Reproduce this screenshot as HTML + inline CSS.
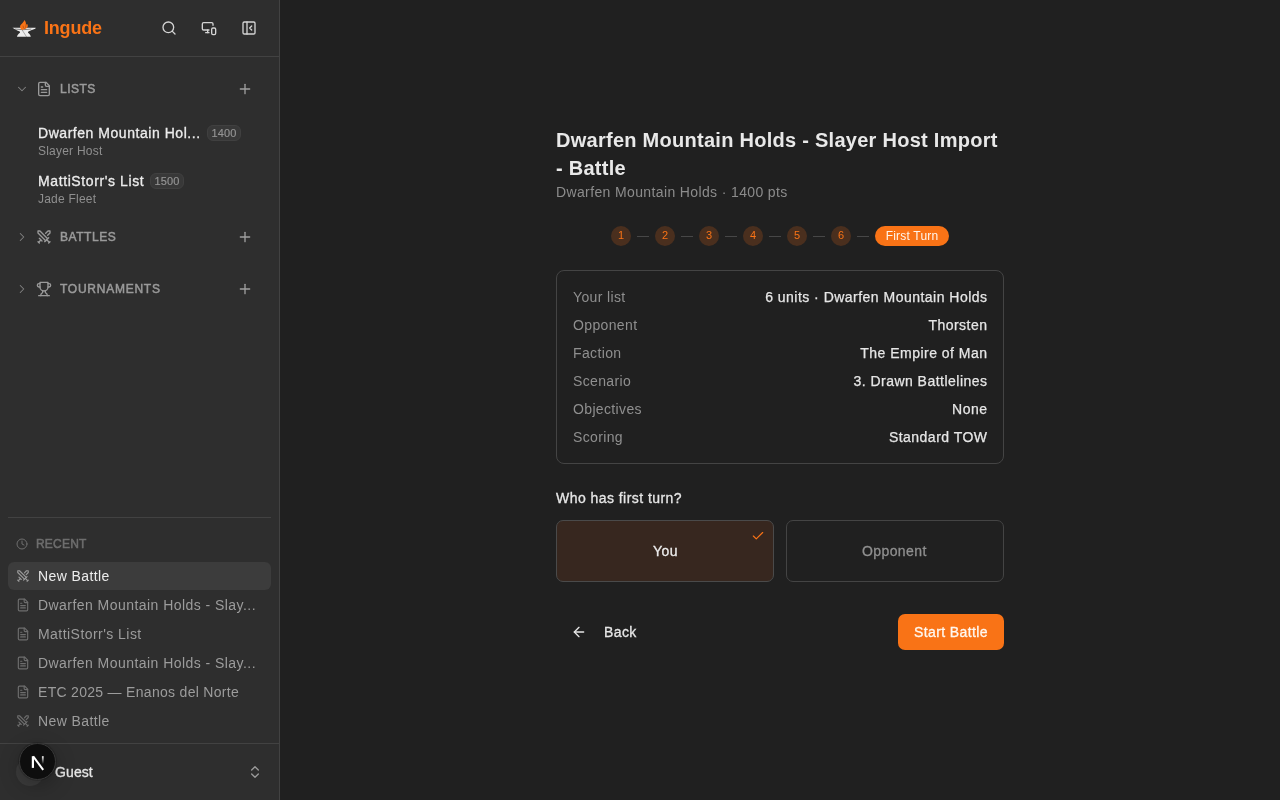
<!DOCTYPE html>
<html><head><meta charset="utf-8">
<style>
*{box-sizing:border-box;margin:0;padding:0}
html,body{width:1280px;height:800px;overflow:hidden;background:#202020;font-family:"Liberation Sans",sans-serif;}
#root{position:absolute;left:0;top:0;width:1280px;height:800px;overflow:hidden;will-change:transform;background:#202020}
.a{position:absolute;white-space:nowrap;line-height:1}
svg{position:absolute;fill:none;stroke-linecap:round;stroke-linejoin:round}
#side{position:absolute;left:0;top:0;width:280px;height:800px;background:#2e2e2e;border-right:1px solid #424242}
.hdr{font-size:12px;font-weight:400;color:#9a9a9a;letter-spacing:0.5px;-webkit-text-stroke:0.5px currentColor}
.t14{font-size:14px;letter-spacing:0.4px}
.t12{font-size:12px;letter-spacing:0.22px}
.med{-webkit-text-stroke:0.3px currentColor}
.badge{position:absolute;height:16px;width:34px;border-radius:6px;background:#383838;border:1px solid #404040;color:#959595;font-size:11px;line-height:14px;text-align:center;letter-spacing:0.1px;-webkit-text-stroke:0.15px currentColor}
.ri{color:#9c9c9c}
.row{position:absolute;left:573px;width:414px;height:20px;font-size:14px;line-height:20px}
.row .l{position:absolute;left:0;top:0;color:#8f8f8f;letter-spacing:0.36px}
.row .v{position:absolute;right:-0.5px;top:0;color:#e6e6e6;letter-spacing:0.48px;-webkit-text-stroke:0.25px currentColor}
.step{position:absolute;top:226px;width:20px;height:20px;border-radius:10px;background:#4a2f1e;color:#f97316;font-size:11px;line-height:19px;text-align:center}
.dash{position:absolute;top:236px;width:12px;height:1px;background:#474747}
</style></head><body><div id="root">
<div id="side">
  <!-- header -->
  <svg style="left:10px;top:16px" width="30" height="24" viewBox="0 0 30 24">
    <path d="M2.5 11.8 L25.7 11.8 L25.3 12.8 C23 13.6 20.5 14.3 18.4 15.4 L17.9 16.8 C19.5 17.8 20.5 19 20.8 20.7 L7 20.7 C7.3 19 8.5 17.8 10 16.8 L9.8 15.5 C7 14.5 4.5 13.3 2.5 11.8 Z" fill="#ececec" stroke="none"/>
    <path d="M5.5 13.1 Q13 14.4 21 13.1" stroke="#2e2e2e" stroke-width="0.7" stroke-opacity="0.8"/>
    <path d="M12.3 14.2 L16.4 20.6" stroke="#2e2e2e" stroke-width="0.5" stroke-opacity="0.7"/>
    <path d="M14.5 3.9 C15.8 5.5 16.2 7 15.8 8.8 L17.2 8 C18.3 9.5 18 11.5 15.8 12.8 L12 14 C10.3 13 9.7 11 10.3 9.5 C11 8 13.5 6.5 14.5 3.9 Z" fill="#f97316" stroke="none"/>
    <path d="M13 10 Q13.2 11.8 14.2 12.6 M16 9.2 Q15.4 10.6 15.7 12" stroke="#5a2a10" stroke-width="0.5" stroke-opacity="0.7"/>
  </svg>
  <div class="a" style="left:44px;top:18.5px;font-size:18px;font-weight:700;color:#f97316;letter-spacing:-0.2px">Ingude</div>
  <svg style="left:161px;top:20px" width="16" height="16" viewBox="0 0 24 24" stroke="#d4d4d4" stroke-width="2"><circle cx="11" cy="11" r="8"/><path d="m21 21-4.3-4.3"/></svg>
  <svg style="left:201px;top:20px" width="16" height="16" viewBox="0 0 24 24" stroke="#d4d4d4" stroke-width="2"><path d="M18 8V6a2 2 0 0 0-2-2H4a2 2 0 0 0-2 2v7a2 2 0 0 0 2 2h8"/><path d="M10 19v-3.96 3.15"/><path d="M7 19h5"/><rect width="6" height="10" x="16" y="12" rx="2"/></svg>
  <svg style="left:241px;top:20px" width="16" height="16" viewBox="0 0 24 24" stroke="#d4d4d4" stroke-width="2"><rect width="18" height="18" x="3" y="3" rx="2"/><path d="M9 3v18"/><path d="m16 15-3-3 3-3"/></svg>
  <div style="position:absolute;left:0;top:56px;width:279px;height:1px;background:#424242"></div>

  <!-- LISTS -->
  <svg style="left:15px;top:82px" width="14" height="14" viewBox="0 0 24 24" stroke="#828282" stroke-width="1.8"><path d="m6 9 6 6 6-6"/></svg>
  <svg style="left:36px;top:81px" width="16" height="16" viewBox="0 0 24 24" stroke="#9a9a9a" stroke-width="2"><path d="M15 2H6a2 2 0 0 0-2 2v16a2 2 0 0 0 2 2h12a2 2 0 0 0 2-2V7Z"/><path d="M14 2v4a2 2 0 0 0 2 2h4"/><path d="M10 9H8"/><path d="M16 13H8"/><path d="M16 17H8"/></svg>
  <div class="a hdr" style="left:60px;top:82.5px;letter-spacing:0.5px">LISTS</div>
  <svg style="left:237px;top:81px" width="16" height="16" viewBox="0 0 24 24" stroke="#a0a0a0" stroke-width="2"><path d="M5 12h14"/><path d="M12 5v14"/></svg>

  <div class="a t14 med" style="left:38px;top:126px;color:#ececec;letter-spacing:0.54px">Dwarfen Mountain Hol...</div>
  <div class="badge" style="left:207px;top:125px">1400</div>
  <div class="a t12" style="left:38px;top:144.8px;color:#8f8f8f">Slayer Host</div>

  <div class="a t14 med" style="left:38px;top:174.2px;color:#ececec;letter-spacing:0.6px">MattiStorr's List</div>
  <div class="badge" style="left:150px;top:173px">1500</div>
  <div class="a t12" style="left:38px;top:193px;color:#8f8f8f">Jade Fleet</div>

  <!-- BATTLES -->
  <svg style="left:15px;top:230px" width="14" height="14" viewBox="0 0 24 24" stroke="#828282" stroke-width="1.8"><path d="m9 18 6-6-6-6"/></svg>
  <svg style="left:36px;top:229px" width="16" height="16" viewBox="0 0 24 24" stroke="#9a9a9a" stroke-width="2"><polyline points="14.5 17.5 3 6 3 3 6 3 17.5 14.5"/><line x1="13" x2="19" y1="19" y2="13"/><line x1="16" x2="20" y1="16" y2="20"/><line x1="19" x2="21" y1="21" y2="19"/><polyline points="14.5 6.5 18 3 21 3 21 6 17.5 9.5"/><line x1="5" x2="9" y1="14" y2="18"/><line x1="7" x2="4" y1="17" y2="20"/><line x1="3" x2="5" y1="19" y2="21"/></svg>
  <div class="a hdr" style="left:60px;top:230.6px;letter-spacing:0.55px">BATTLES</div>
  <svg style="left:237px;top:229px" width="16" height="16" viewBox="0 0 24 24" stroke="#a0a0a0" stroke-width="2"><path d="M5 12h14"/><path d="M12 5v14"/></svg>

  <!-- TOURNAMENTS -->
  <svg style="left:15px;top:282px" width="14" height="14" viewBox="0 0 24 24" stroke="#828282" stroke-width="1.8"><path d="m9 18 6-6-6-6"/></svg>
  <svg style="left:36px;top:281px" width="16" height="16" viewBox="0 0 24 24" stroke="#9a9a9a" stroke-width="2"><path d="M6 9H4.5a2.5 2.5 0 0 1 0-5H6"/><path d="M18 9h1.5a2.5 2.5 0 0 0 0-5H18"/><path d="M4 22h16"/><path d="M10 14.66V17c0 .55-.47.98-.97 1.21C7.85 18.75 7 20.24 7 22"/><path d="M14 14.66V17c0 .55.47.98.97 1.21C16.150 18.75 17 20.24 17 22"/><path d="M18 2H6v7a6 6 0 0 0 12 0V2Z"/></svg>
  <div class="a hdr" style="left:60px;top:282.5px;letter-spacing:0.75px">TOURNAMENTS</div>
  <svg style="left:237px;top:281px" width="16" height="16" viewBox="0 0 24 24" stroke="#a0a0a0" stroke-width="2"><path d="M5 12h14"/><path d="M12 5v14"/></svg>

  <!-- RECENT -->
  <div style="position:absolute;left:8px;top:517px;width:263px;height:1px;background:#424242"></div>
  <svg style="left:16px;top:538px" width="12" height="12" viewBox="0 0 24 24" stroke="#6e6e6e" stroke-width="2"><circle cx="12" cy="12" r="10"/><polyline points="12 6 12 12 16 14"/></svg>
  <div class="a hdr" style="left:36px;top:537.7px;color:#6e6e6e;letter-spacing:0.2px">RECENT</div>

  <div style="position:absolute;left:8px;top:562px;width:263px;height:28px;border-radius:6px;background:#3c3c3c"></div>
  <svg style="left:16px;top:569px" width="14" height="14" viewBox="0 0 24 24" stroke="#9a9a9a" stroke-width="2"><polyline points="14.5 17.5 3 6 3 3 6 3 17.5 14.5"/><line x1="13" x2="19" y1="19" y2="13"/><line x1="16" x2="20" y1="16" y2="20"/><line x1="19" x2="21" y1="21" y2="19"/><polyline points="14.5 6.5 18 3 21 3 21 6 17.5 9.5"/><line x1="5" x2="9" y1="14" y2="18"/><line x1="7" x2="4" y1="17" y2="20"/><line x1="3" x2="5" y1="19" y2="21"/></svg>
  <div class="a t14" style="left:38px;top:569px;color:#ececec">New Battle</div>

  <svg style="left:16px;top:598px" width="14" height="14" viewBox="0 0 24 24" stroke="#6e6e6e" stroke-width="2"><path d="M15 2H6a2 2 0 0 0-2 2v16a2 2 0 0 0 2 2h12a2 2 0 0 0 2-2V7Z"/><path d="M14 2v4a2 2 0 0 0 2 2h4"/><path d="M10 9H8"/><path d="M16 13H8"/><path d="M16 17H8"/></svg>
  <div class="a t14 ri" style="left:38px;top:598px;letter-spacing:0.45px">Dwarfen Mountain Holds - Slay...</div>
  <svg style="left:16px;top:627px" width="14" height="14" viewBox="0 0 24 24" stroke="#6e6e6e" stroke-width="2"><path d="M15 2H6a2 2 0 0 0-2 2v16a2 2 0 0 0 2 2h12a2 2 0 0 0 2-2V7Z"/><path d="M14 2v4a2 2 0 0 0 2 2h4"/><path d="M10 9H8"/><path d="M16 13H8"/><path d="M16 17H8"/></svg>
  <div class="a t14 ri" style="left:38px;top:627.1px;letter-spacing:0.45px">MattiStorr's List</div>
  <svg style="left:16px;top:656px" width="14" height="14" viewBox="0 0 24 24" stroke="#6e6e6e" stroke-width="2"><path d="M15 2H6a2 2 0 0 0-2 2v16a2 2 0 0 0 2 2h12a2 2 0 0 0 2-2V7Z"/><path d="M14 2v4a2 2 0 0 0 2 2h4"/><path d="M10 9H8"/><path d="M16 13H8"/><path d="M16 17H8"/></svg>
  <div class="a t14 ri" style="left:38px;top:656.2px;letter-spacing:0.45px">Dwarfen Mountain Holds - Slay...</div>
  <svg style="left:16px;top:685px" width="14" height="14" viewBox="0 0 24 24" stroke="#6e6e6e" stroke-width="2"><path d="M15 2H6a2 2 0 0 0-2 2v16a2 2 0 0 0 2 2h12a2 2 0 0 0 2-2V7Z"/><path d="M14 2v4a2 2 0 0 0 2 2h4"/><path d="M10 9H8"/><path d="M16 13H8"/><path d="M16 17H8"/></svg>
  <div class="a t14 ri" style="left:38px;top:685.3px;letter-spacing:0.3px">ETC 2025 — Enanos del Norte</div>
  <svg style="left:16px;top:714px" width="14" height="14" viewBox="0 0 24 24" stroke="#6e6e6e" stroke-width="2"><polyline points="14.5 17.5 3 6 3 3 6 3 17.5 14.5"/><line x1="13" x2="19" y1="19" y2="13"/><line x1="16" x2="20" y1="16" y2="20"/><line x1="19" x2="21" y1="21" y2="19"/><polyline points="14.5 6.5 18 3 21 3 21 6 17.5 9.5"/><line x1="5" x2="9" y1="14" y2="18"/><line x1="7" x2="4" y1="17" y2="20"/><line x1="3" x2="5" y1="19" y2="21"/></svg>
  <div class="a t14 ri" style="left:38px;top:714.4px">New Battle</div>

  <!-- footer -->
  <div style="position:absolute;left:0;top:743px;width:279px;height:1px;background:#424242"></div>
  <div style="position:absolute;left:16px;top:758px;width:28px;height:28px;border-radius:14px;background:#3b3b3b"></div>
  <div class="a t14 med" style="left:55px;top:765.3px;color:#e6e6e6;letter-spacing:0.1px">Guest</div>
  <svg style="left:247px;top:764px" width="16" height="16" viewBox="0 0 24 24" stroke="#9a9a9a" stroke-width="2"><path d="m7 15 5 5 5-5"/><path d="m7 9 5-5 5 5"/></svg>
</div>

<!-- Next.js badge -->
<div style="position:absolute;left:19px;top:743px;width:37px;height:37px;border-radius:50%;background:#0e0e0e;border:1px solid #383838;box-shadow:0 0 0 1px rgba(0,0,0,0.15),0 6px 20px rgba(0,0,0,0.25)"></div>
<svg style="left:30px;top:754px" width="16" height="17" viewBox="0 0 16 17">
  <defs><linearGradient id="ng" gradientUnits="userSpaceOnUse" x1="0" y1="2" x2="0" y2="10"><stop offset="0" stop-color="#fff"/><stop offset="1" stop-color="#fff" stop-opacity="0"/></linearGradient></defs>
  <path d="M2.9 2.2v11.7" stroke="#fff" stroke-width="2.2" stroke-linecap="butt"/>
  <path d="M3.2 2.4 L13.2 15.8" stroke="#fff" stroke-width="2" stroke-linecap="butt"/>
  <path d="M12.8 2.2v8.5" stroke="url(#ng)" stroke-width="1.8" stroke-linecap="butt"/>
</svg>

<!-- main -->
<div class="a" style="left:556px;font-size:20px;font-weight:700;color:#e8e8e8;letter-spacing:0.27px;line-height:28px;top:125.5px">Dwarfen Mountain Holds - Slayer Host Import<br>- Battle</div>
<div class="a t14" style="left:556px;top:185.1px;color:#8c8c8c;letter-spacing:0.37px">Dwarfen Mountain Holds · 1400 pts</div>

<div class="step" style="left:611px">1</div><div class="dash" style="left:637px"></div>
<div class="step" style="left:655px">2</div><div class="dash" style="left:681px"></div>
<div class="step" style="left:699px">3</div><div class="dash" style="left:725px"></div>
<div class="step" style="left:743px">4</div><div class="dash" style="left:769px"></div>
<div class="step" style="left:787px">5</div><div class="dash" style="left:813px"></div>
<div class="step" style="left:831px">6</div><div class="dash" style="left:857px"></div>
<div style="position:absolute;left:875px;top:226px;width:74px;height:20px;border-radius:10px;background:#f97316;color:#fff5ec;font-size:12px;line-height:20px;text-align:center;letter-spacing:0.2px">First Turn</div>

<div style="position:absolute;left:556px;top:270px;width:448px;height:194px;border:1px solid #444;border-radius:8px"></div>
<div class="row" style="top:287px"><span class="l">Your list</span><span class="v">6 units · Dwarfen Mountain Holds</span></div>
<div class="row" style="top:315px"><span class="l">Opponent</span><span class="v">Thorsten</span></div>
<div class="row" style="top:343px"><span class="l">Faction</span><span class="v">The Empire of Man</span></div>
<div class="row" style="top:371px"><span class="l">Scenario</span><span class="v">3. Drawn Battlelines</span></div>
<div class="row" style="top:399px"><span class="l">Objectives</span><span class="v">None</span></div>
<div class="row" style="top:427px"><span class="l">Scoring</span><span class="v">Standard TOW</span></div>

<div class="a t14 med" style="left:556px;top:491.1px;color:#e6e6e6;letter-spacing:0.45px">Who has first turn?</div>

<div style="position:absolute;left:556px;top:520px;width:218px;height:62px;border:1px solid #4a4a4a;border-radius:7px;background:#37271f"></div>
<div class="a t14 med" style="left:653px;top:544.1px;color:#ececec">You</div>
<svg style="left:751px;top:529px" width="14" height="14" viewBox="0 0 24 24" stroke="#f97316" stroke-width="2"><path d="M20 6 9 17l-5-5"/></svg>
<div style="position:absolute;left:786px;top:520px;width:218px;height:62px;border:1px solid #444;border-radius:7px"></div>
<div class="a t14 med" style="left:862px;top:544.1px;color:#8f8f8f">Opponent</div>

<svg style="left:571px;top:624px" width="16" height="16" viewBox="0 0 24 24" stroke="#e6e6e6" stroke-width="2"><path d="m12 19-7-7 7-7"/><path d="M19 12H5"/></svg>
<div class="a t14 med" style="left:604px;top:625.2px;color:#e6e6e6">Back</div>
<div style="position:absolute;left:898px;top:614px;width:106px;height:36px;border-radius:7px;background:#f97316"></div>
<div class="a t14 med" style="left:914px;top:625px;color:#fff8f0">Start Battle</div>
</div></body></html>
